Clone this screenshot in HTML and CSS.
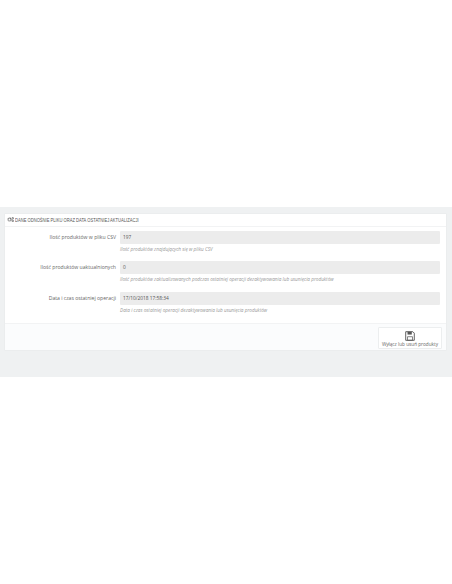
FILE: index.html
```html
<!DOCTYPE html>
<html lang="pl">
<head>
    <meta charset="UTF-8">
    <meta name="viewport" content="width=device-width, initial-scale=1.0">
    <title>Dane odnośnie pliku</title>
    <link rel="stylesheet" href="styles.css">
</head>
<body>
    <div class="tlo">
        <div class="panel">
            <div class="naglowek">
                <svg class="ikona-cogs" viewBox="0 0 14 10" width="7" height="5">
                    <circle cx="5" cy="5" r="3" fill="none" stroke="#555" stroke-width="2.2" stroke-dasharray="1.6 0.7"/>
                    <circle cx="11.5" cy="2.5" r="1.6" fill="none" stroke="#555" stroke-width="1.4"/>
                    <circle cx="11.5" cy="7.8" r="1.6" fill="none" stroke="#555" stroke-width="1.4"/>
                </svg>
                <span class="tytul">DANE ODNOŚNIE PLIKU ORAZ DATA OSTATNIEJ AKTUALIZACJI</span>
            </div>
            <div class="formularz">
                <div class="wiersz">
                    <label class="etykieta">Ilość produktów w pliku CSV</label>
                    <div class="pole">
                        <div class="wartosc">197</div>
                        <p class="pomoc">Ilość produktów znajdujących się w pliku CSV</p>
                    </div>
                </div>
                <div class="wiersz">
                    <label class="etykieta">Ilość produktów uaktualnionych</label>
                    <div class="pole">
                        <div class="wartosc">0</div>
                        <p class="pomoc">Ilość produktów zaktualizowanych podczas ostatniej operacji dezaktywowania lub usunięcia produktów</p>
                    </div>
                </div>
                <div class="wiersz">
                    <label class="etykieta">Data i czas ostatniej operacji</label>
                    <div class="pole">
                        <div class="wartosc">17/10/2018 17:58:34</div>
                        <p class="pomoc">Data i czas ostatniej operacji dezaktywowania lub usunięcia produktów</p>
                    </div>
                </div>
            </div>
            <div class="stopka">
                <button class="przycisk">
                    <svg viewBox="0 0 14 14" width="10" height="10">
                        <path d="M1 1h10l2 2v10H1z" fill="none" stroke="#555" stroke-width="1.3"/>
                        <path d="M3.5 1h6v4h-6z" fill="#555"/>
                        <path d="M3.5 8h7v5h-7z" fill="none" stroke="#555" stroke-width="1"/>
                    </svg>
                    <span>Wyłącz lub usuń produkty</span>
                </button>
            </div>
        </div>
    </div>
</body>
</html>
```

FILE: styles.css
```css
body {
    margin: 0;
    padding-top: 207px;
    background-color: white;
    font-family: "Open Sans", "Liberation Sans", sans-serif;
    font-size: 5.1px;
    color: #666;
}

.tlo {
    height: 170px;
    box-sizing: border-box;
    padding: 6px 5px 0 4px;
    background-color: #eff1f2;
}

.panel {
    height: 138px;
    box-sizing: border-box;
    background-color: white;
    border: 1px solid #ebedee;
    border-radius: 1px;
    display: flex;
    flex-direction: column;
}

.naglowek {
    height: 12px;
    display: flex;
    align-items: center;
    gap: 1px;
    padding-left: 2px;
    border-bottom: 1px solid #f2f3f4;
    font-family: "Liberation Sans", sans-serif;
    font-size: 5.2px;
    color: #555;
}

.ikona-cogs {
    flex-shrink: 0;
}

.tytul {
    white-space: nowrap;
    transform: scaleX(0.79);
    transform-origin: left center;
}

.formularz {
    flex: 1;
    padding-top: 4px;
}

.wiersz {
    display: flex;
    gap: 4px;
    height: 30.6px;
}

.etykieta {
    width: 111px;
    height: 13px;
    line-height: 13px;
    text-align: right;
    flex-shrink: 0;
}

.pole {
    flex: 1;
    margin-right: 6px;
}

.wartosc {
    height: 13px;
    line-height: 13px;
    padding-left: 3px;
    background-color: #ececec;
    border-radius: 1px;
    font-size: 4.8px;
    color: #555;
}

.pomoc {
    margin: 2px 0 0;
    font-size: 4.7px;
    line-height: 6px;
    font-style: italic;
    color: #999;
}

.stopka {
    height: 28px;
    box-sizing: border-box;
    display: flex;
    justify-content: flex-end;
    align-items: flex-start;
    padding: 3px 4px 0 0;
    background-color: #fbfcfd;
    border-top: 1px solid #f2f3f4;
}

.przycisk {
    width: 64px;
    height: 22px;
    padding: 3px 0 0;
    display: flex;
    flex-direction: column;
    align-items: center;
    background-color: white;
    border: 1px solid #eceeef;
    border-radius: 1px;
    font-family: inherit;
    font-size: 4.7px;
    line-height: 6px;
    color: #666;
}

.przycisk svg {
    flex-shrink: 0;
}

.przycisk span {
    white-space: nowrap;
}
```
